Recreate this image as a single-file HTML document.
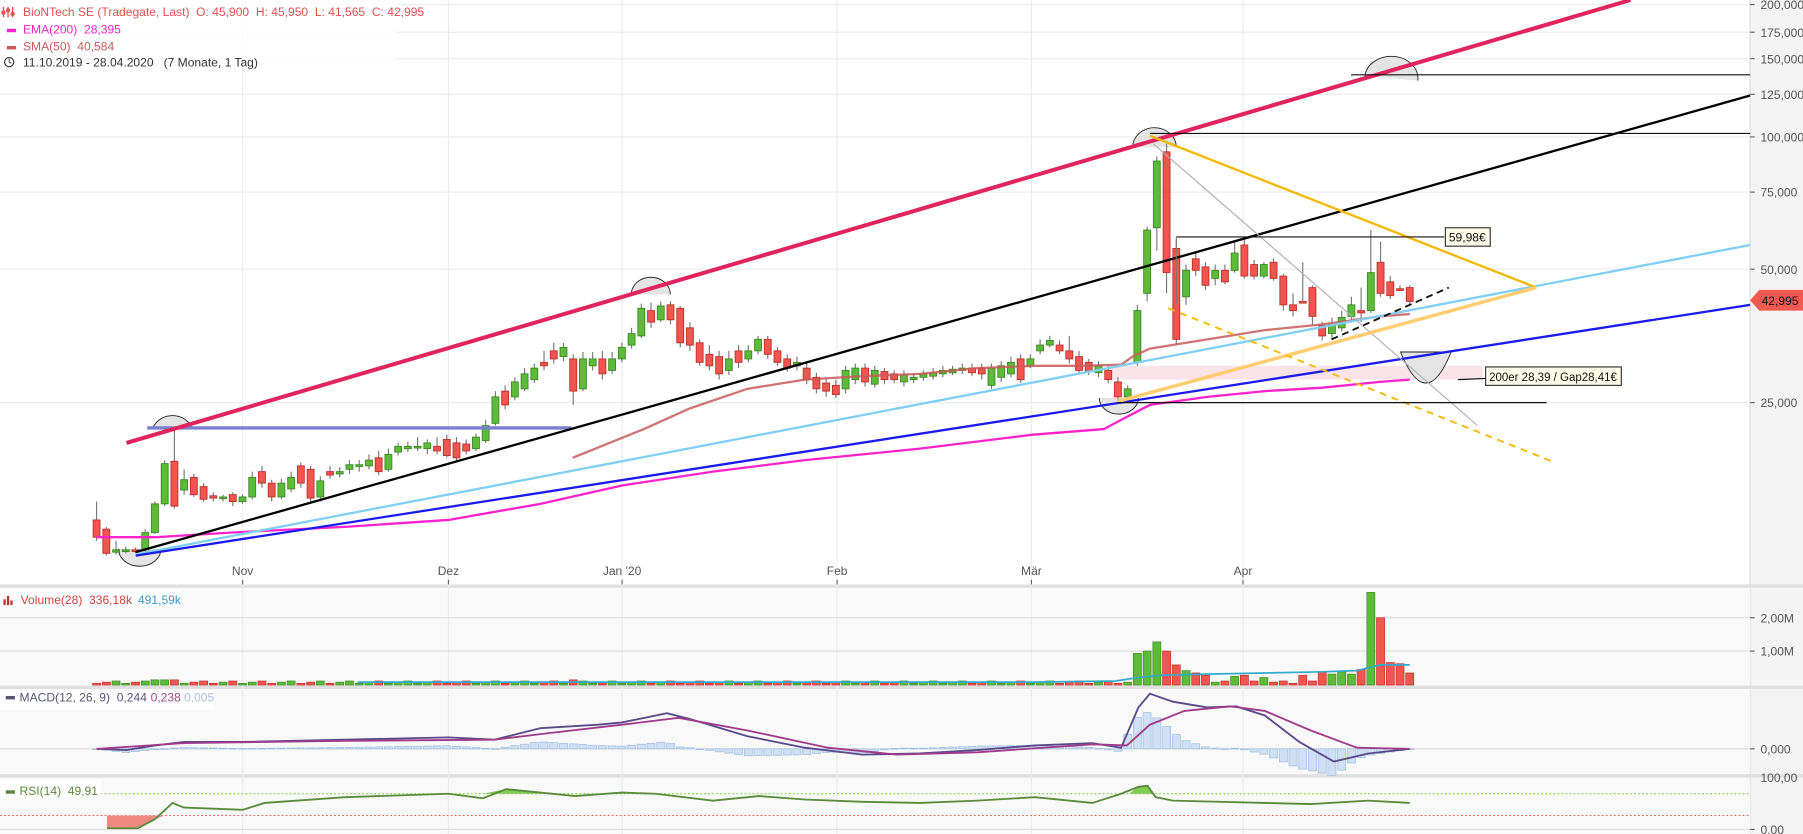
<!DOCTYPE html>
<html><head><meta charset="utf-8"><style>
html,body{margin:0;padding:0;background:#fff;overflow:hidden}
svg{display:block}
text{font-family:"Liberation Sans",Arial,sans-serif;white-space:pre}
</style></head><body>
<svg id="s" xml:space="preserve" width="1803" height="834" viewBox="0 0 1568 725" preserveAspectRatio="none" xmlns="http://www.w3.org/2000/svg">
<rect x="0" y="0" width="1568" height="725" fill="#fff"/>
<rect x="1522" y="0" width="46" height="725" fill="#f4f4f4"/>
<line x1="1522" y1="0" x2="1522" y2="725" stroke="#dcdcdc" stroke-width="1"/>
<rect x="0" y="511" width="1522" height="85" fill="#f9f9f9"/>
<rect x="0" y="599" width="1522" height="74" fill="#f9f9f9"/>
<rect x="0" y="676" width="1522" height="49" fill="#f9f9f9"/>
<rect x="0" y="508" width="1568" height="3" fill="#e0e0e0"/>
<rect x="0" y="596" width="1568" height="3" fill="#e0e0e0"/>
<rect x="0" y="673" width="1568" height="3" fill="#e0e0e0"/>
<g stroke="#ececec" stroke-width="1">
<line x1="0" y1="4" x2="1522" y2="4"/><line x1="0" y1="28" x2="1522" y2="28"/><line x1="0" y1="51" x2="1522" y2="51"/>
<line x1="0" y1="82" x2="1522" y2="82"/><line x1="0" y1="119" x2="1522" y2="119"/><line x1="0" y1="167" x2="1522" y2="167"/>
<line x1="0" y1="234" x2="1522" y2="234"/><line x1="0" y1="350" x2="1522" y2="350"/>
<line x1="211" y1="0" x2="211" y2="725"/><line x1="390" y1="0" x2="390" y2="725"/><line x1="541" y1="0" x2="541" y2="725"/>
<line x1="728" y1="0" x2="728" y2="725"/><line x1="897" y1="0" x2="897" y2="725"/><line x1="1081" y1="0" x2="1081" y2="725"/>
</g>
<g stroke="#dedede" stroke-width="1">
<line x1="0" y1="537" x2="1522" y2="537"/><line x1="0" y1="566" x2="1522" y2="566"/>
<line x1="0" y1="651" x2="1522" y2="651"/><line x1="0" y1="721" x2="1522" y2="721"/>
</g>
<line x1="0" y1="690" x2="1522" y2="690" stroke="#66cc22" stroke-width="0.8" stroke-dasharray="1.5,2"/>
<line x1="0" y1="709" x2="1522" y2="709" stroke="#ee4444" stroke-width="0.8" stroke-dasharray="1.5,2"/>

<g font-size="10.5" fill="#555">
<text x="1531" y="8">200,000</text><text x="1531" y="32">175,000</text><text x="1531" y="55">150,000</text>
<text x="1531" y="86">125,000</text><text x="1531" y="123">100,000</text><text x="1531" y="171">75,000</text>
<text x="1531" y="238">50,000</text><text x="1531" y="354">25,000</text>
<text x="1531" y="541">2,00M</text><text x="1531" y="570">1,00M</text>
<text x="1531" y="655">0,000</text><text x="1531" y="680">100,00</text><text x="1531" y="725">0,00</text>
</g>
<g stroke="#666" stroke-width="1">
<line x1="1522" y1="4" x2="1526" y2="4"/><line x1="1522" y1="28" x2="1526" y2="28"/><line x1="1522" y1="51" x2="1526" y2="51"/>
<line x1="1522" y1="82" x2="1526" y2="82"/><line x1="1522" y1="119" x2="1526" y2="119"/><line x1="1522" y1="167" x2="1526" y2="167"/>
<line x1="1522" y1="234" x2="1526" y2="234"/><line x1="1522" y1="350" x2="1526" y2="350"/>
<line x1="1522" y1="537" x2="1526" y2="537"/><line x1="1522" y1="566" x2="1526" y2="566"/><line x1="1522" y1="651" x2="1526" y2="651"/>
<line x1="1522" y1="721" x2="1526" y2="721"/>
</g>
<g font-size="10.5" fill="#555" text-anchor="middle">
<text x="211" y="500">Nov</text><text x="390" y="500">Dez</text><text x="541" y="500">Jan '20</text>
<text x="728" y="500">Feb</text><text x="897" y="500">Mär</text><text x="1081" y="500">Apr</text>
</g>
<g stroke="#666" stroke-width="1">
<line x1="211" y1="504" x2="211" y2="508"/><line x1="390" y1="504" x2="390" y2="508"/><line x1="541" y1="504" x2="541" y2="508"/>
<line x1="728" y1="504" x2="728" y2="508"/><line x1="897" y1="504" x2="897" y2="508"/><line x1="1081" y1="504" x2="1081" y2="508"/>
</g>

<rect x="967" y="318" width="323" height="12" fill="#fbe3ea"/>
<g fill="#e4e4e4" stroke="#222" stroke-width="0.8">
<path d="M133,372 A18,16 0 0 1 167,372 Z"/>
<path d="M549,256 A17,15 0 0 1 583,256"/>
<path d="M985,128 A19,17 0 0 1 1023,128"/>
<path d="M1187,66 A17,14 0 0 1 1233,70"/>
<path d="M103,477 A17,14 0 0 0 140,477"/>
<path d="M956,346 A17,14 0 0 0 990,346"/>
<path d="M1218,306 Q1240,360 1262,306 Z"/>
</g>
<g id="cnd"></g>
<polyline fill="none" stroke="#ff22cc" stroke-width="2" points="84,467 135,467 200,463 300,458 390,452 470,438 541,422 620,410 700,400 800,390 897,378 960,373 975,365 1000,352 1050,345 1100,340 1150,337 1200,332 1226,330"/>
<polyline fill="none" stroke="#c85a5a" stroke-width="2" stroke-opacity="0.85" points="498,398 530,385 560,373 600,355 650,338 700,330 750,327 800,325 850,320 900,318 940,318 975,317 985,310 1000,303 1050,295 1100,287 1150,282 1200,275 1226,273"/>
<line x1="128" y1="372" x2="497" y2="372" stroke="#7b7fd0" stroke-width="3"/>
<line x1="110" y1="385" x2="1418" y2="0" stroke="#e0245e" stroke-width="3.5"/>
<line x1="118" y1="480" x2="1522" y2="83" stroke="#000" stroke-width="2"/>
<line x1="118" y1="482" x2="1522" y2="213" stroke="#7fcff5" stroke-width="2"/>
<line x1="118" y1="483" x2="1522" y2="265" stroke="#1a1aee" stroke-width="2"/>
<line x1="1003" y1="125" x2="1285" y2="370" stroke="#b0b0b0" stroke-width="1"/>
<line x1="1000" y1="118" x2="1336" y2="250" stroke="#f5b800" stroke-width="2"/>
<line x1="972" y1="349" x2="1336" y2="250" stroke="#ffcc70" stroke-width="3"/>
<line x1="1016" y1="268" x2="1352" y2="402" stroke="#f5b800" stroke-width="1.6" stroke-dasharray="6,5"/>
<line x1="1158" y1="295" x2="1260" y2="250" stroke="#111" stroke-width="1.6" stroke-dasharray="6,4"/>
<g stroke="#111" stroke-width="1">
<line x1="1175" y1="65" x2="1522" y2="65"/>
<line x1="1000" y1="116" x2="1522" y2="116"/>
<line x1="1023" y1="206" x2="1256" y2="206"/>
<line x1="1023" y1="206" x2="1023" y2="265" stroke="#777"/>
<line x1="972" y1="350" x2="1345" y2="350"/>
<line x1="1268" y1="330" x2="1292" y2="329"/>
</g>
<rect x="1257" y="198" width="39" height="16" fill="#fffbe8" stroke="#333" stroke-width="1"/>
<text x="1260" y="210" font-size="10.5" fill="#111">59,98€</text>
<rect x="1292" y="319" width="118" height="16" fill="#fffbe8" stroke="#333" stroke-width="1"/>
<text x="1295" y="331" font-size="10" fill="#111">200er 28,39 / Gap28,41€</text>
<path d="M1522,261 L1530,252 L1568,252 L1568,270 L1530,270 Z" fill="#f05a50"/>
<text x="1532" y="265" font-size="10.5" fill="#111">42,995</text>

<g id="vol"></g>
<polyline fill="none" stroke="#33aacc" stroke-width="1.5" points="311,593 700,593 900,593 970,592 990,589 1010,587 1050,586 1100,585 1150,584 1180,583 1200,578 1226,578"/>
<g id="hist"></g>
<polyline id="macd" fill="none" stroke="#5a4a8a" stroke-width="1.6" points="84,651 110,652 135,648 160,645 211,645 300,643 390,641 430,643 470,633 520,630 541,628 580,620 600,625 650,640 700,650 750,656 800,655 850,652 900,648 950,646 975,650 990,615 1000,603 1020,610 1050,615 1075,614 1100,622 1130,645 1160,662 1190,655 1226,651"/>
<polyline id="sig" fill="none" stroke="#a03a8a" stroke-width="1.6" points="84,651 160,646 300,644 430,643 480,637 541,630 590,624 650,635 720,650 780,656 850,654 950,647 980,648 1000,630 1030,618 1070,614 1100,618 1140,635 1180,650 1226,651"/>
<path d="M93,709 L93,720 L120,720 L135,712 L143,709 Z" fill="#f08a80"/>
<g fill="#7fcc55">
<path d="M420,690 L440,686 L460,688 L480,690 Z"/>
<path d="M982,690 L990,684 L998,683 L1003,690 Z"/>
</g>
<polyline fill="none" stroke="#5a8a3a" stroke-width="1.6" points="93,720 120,720 135,712 150,698 160,702 211,704 230,698 300,693 390,690 420,694 440,686 460,688 500,692 541,689 570,690 620,696 660,692 700,695 750,697 800,698 850,696 900,693 950,698 975,690 990,684 998,683 1005,693 1020,696 1100,698 1140,699 1190,696 1226,698"/>

<rect x="0" y="0" width="345" height="56" fill="#fff" fill-opacity="0.85"/>
<g font-size="10.5">
<g stroke="#e05050" stroke-width="1.2" fill="none"><line x1="3" y1="6" x2="3" y2="15"/><line x1="7" y1="6" x2="7" y2="15"/><line x1="11" y1="6" x2="11" y2="15"/><circle cx="3" cy="11" r="1.3"/><circle cx="7" cy="9" r="1.3"/><circle cx="11" cy="12" r="1.3"/></g>
<text x="20" y="14" fill="#e05050">BioNTech SE (Tradegate, Last)  O: 45,900  H: 45,950  L: 41,565  C: 42,995</text>
<rect x="6" y="25" width="8" height="3" fill="#ff22cc"/><text x="20" y="29" fill="#ff22cc">EMA(200)  28,395</text>
<rect x="6" y="40" width="8" height="3" fill="#c85a5a"/><text x="20" y="44" fill="#c85a5a">SMA(50)  40,584</text>
<circle cx="8" cy="54" r="4" fill="none" stroke="#333" stroke-width="1"/><path d="M8,51 L8,54 L10,55" stroke="#333" fill="none" stroke-width="0.8"/>
<text x="20" y="58" fill="#333">11.10.2019 - 28.04.2020   (7 Monate, 1 Tag)</text>
<rect x="0" y="512" width="158" height="17" fill="#fff"/>
<rect x="3" y="521" width="2" height="5" fill="#c03030"/><rect x="6" y="518" width="2" height="8" fill="#c03030"/><rect x="9" y="522" width="2" height="4" fill="#c03030"/>
<text x="18" y="525" fill="#d04040">Volume(28)  336,18k</text><text x="120" y="525" fill="#3399cc">491,59k</text>
<rect x="0" y="600" width="186" height="17" fill="#fff"/>
<rect x="5" y="605" width="8" height="3" fill="#555577"/>
<text x="17" y="610" fill="#555577">MACD(12, 26, 9)  0,244</text><text x="131" y="610" fill="#a04a8a">0,238</text><text x="160" y="610" fill="#a8c0e0">0,005</text>
<rect x="0" y="678" width="88" height="16" fill="#fff"/>
<rect x="5" y="687" width="8" height="3" fill="#5a8a3a"/>
<text x="17" y="691" fill="#5a8a3a">RSI(14)  49,91</text>
</g>
</svg>
<script>
(function(){
var NS="http://www.w3.org/2000/svg";
var D=[[452,467,436,470],[460,481,458,483],[480,478,470,482],[479,478,475,481],[478,479,476,481],[478,463,460,480],[463,438,436,464],[438,403,400,440],[401,440,372,442],[426,417,408,430],[415,430,412,432],[423,434,420,436],[431,433,428,436],[432,432,430,436],[430,436,428,440],[436,432,430,438],[432,415,410,434],[410,420,405,424],[420,432,417,436],[432,420,416,434],[425,415,410,428],[405,420,402,424],[408,433,405,437],[432,418,414,436],[410,413,405,416],[412,410,406,415],[408,404,400,412],[405,404,400,410],[405,400,395,408],[398,410,392,413],[408,395,390,410],[393,388,385,396],[390,388,384,393],[388,388,380,392],[390,385,382,395],[388,392,380,395],[382,396,378,398],[385,398,380,400],[386,392,382,395],[390,380,377,392],[383,370,365,385],[368,345,340,370],[340,352,335,356],[345,332,328,348],[338,325,320,340],[330,320,316,333],[315,318,305,322],[305,312,298,316],[310,302,298,314],[312,340,308,352],[338,312,306,340],[318,312,306,322],[312,325,305,330],[322,312,306,325],[312,302,298,315],[300,290,285,303],[292,268,264,294],[270,280,263,285],[278,266,262,280],[265,278,262,282],[268,298,266,302],[285,300,280,305],[298,315,295,318],[308,318,300,322],[310,325,305,330],[322,312,305,326],[305,315,300,320],[312,305,300,315],[305,295,292,308],[295,308,292,312],[305,315,302,318],[312,320,308,323],[318,315,310,322],[320,330,316,334],[328,338,324,342],[333,340,328,345],[335,343,330,346],[338,322,318,342],[330,320,316,334],[320,332,316,336],[334,322,318,337],[323,330,320,334],[325,330,322,333],[332,326,322,336],[330,328,325,333],[328,325,322,331],[327,324,320,330],[325,322,318,328],[324,321,318,326],[322,320,316,325],[320,324,316,327],[320,325,316,330],[335,320,316,338],[328,318,314,332],[325,315,310,328],[312,330,308,333],[318,312,308,320],[305,300,295,308],[300,296,292,302],[300,305,296,308],[305,312,292,316],[310,322,305,325],[315,323,312,326],[324,318,314,328],[322,330,318,333],[332,345,328,350],[345,338,335,350],[315,270,265,318],[255,200,197,262],[198,140,136,218],[132,237,125,255],[216,295,210,300],[258,235,230,265],[225,235,220,240],[232,248,228,252],[242,235,230,248],[235,245,230,247],[235,220,210,237],[213,240,208,242],[230,240,226,243],[240,230,228,242],[228,242,225,244],[240,265,238,270],[265,270,255,275],[262,262,228,263],[250,275,248,282],[283,292,280,296],[290,282,276,294],[285,276,270,288],[275,265,258,278],[270,272,250,280],[270,237,200,272],[228,255,210,258],[245,257,240,260],[251,252,248,253],[250,262,248,266]];
var V={107:568,108:566,109:558,110:566,111:578,112:583,113:585,114:587,117:588,118:587,120:589,124:587,126:584,127:586,128:584,129:586,130:582,131:515,132:537,133:576,134:577,135:585};
var g=document.getElementById("cnd"),vg=document.getElementById("vol");
var n=D.length,sp=(1226-84)/(n-1);
function el(t,a,p){var e=document.createElementNS(NS,t);for(var k in a)e.setAttribute(k,a[k]);p.appendChild(e);return e;}
for(var i=0;i<n;i++){var d=D[i],x=84+i*sp,up=d[1]<d[0]||(d[1]==d[0]&&i%2);
el("line",{x1:x,y1:d[2],x2:x,y2:d[3],stroke:"#777","stroke-width":1},g);
var t=Math.min(d[0],d[1]),h=Math.max(Math.abs(d[0]-d[1]),1.5);
el("rect",{x:x-3,y:t,width:6,height:h,fill:up?"#5dbb3a":"#f0564f",stroke:up?"#3d8a24":"#c0302a","stroke-width":0.8},g);
var vy=V[i]||(594-((i*37)%3)),vy2=(i==6||i==7||i==8||i==49)?591:vy;
el("rect",{x:x-3.5,y:vy2,width:7,height:595.5-vy2,fill:up?"#5dbb3a":"#f0564f",stroke:up?"#3d8a24":"#c0302a","stroke-width":0.6},vg);}
function pts(id){return document.getElementById(id).getAttribute("points").trim().split(/\s+/).map(function(s){return s.split(",").map(Number);});}
function interp(P,x){for(var j=0;j<P.length-1;j++){if(x>=P[j][0]&&x<=P[j+1][0]){var f=(x-P[j][0])/(P[j+1][0]-P[j][0]);return P[j][1]+f*(P[j+1][1]-P[j][1]);}}return 651;}
var M=pts("macd"),S=pts("sig"),hg=document.getElementById("hist");
for(var i=0;i<n;i++){var x=84+i*sp,v=(interp(S,x)-interp(M,x))*1.2,y=v>0?651-v:651,h=Math.max(Math.abs(v),0.6);
el("rect",{x:x-3.5,y:y,width:7,height:h,fill:"#cfe0f5",stroke:"#9dbde0","stroke-width":0.6},hg);}
})();
</script>
</body></html>
